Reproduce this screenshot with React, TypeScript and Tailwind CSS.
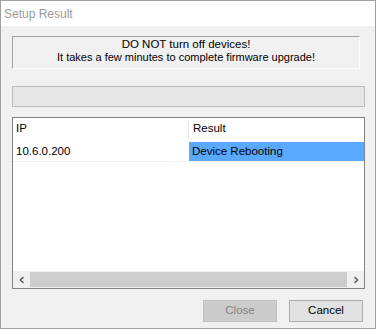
import React from "react";

const font = { fontFamily: '"Liberation Sans", Arial, sans-serif' };

function HScrollbar() {
  return (
    <div className="flex h-[17px] bg-[#f0f0f0] items-stretch">
      <div className="w-[17px] flex items-center justify-center">
        <svg width="8" height="8" viewBox="0 0 8 8">
          <path d="M5.5 1 L2.5 4 L5.5 7" fill="none" stroke="#606060" strokeWidth="1.6" />
        </svg>
      </div>
      <div className="flex-1 py-[1px]">
        <div className="h-full bg-[#cdcdcd]" />
      </div>
      <div className="w-[17px] flex items-center justify-center">
        <svg width="8" height="8" viewBox="0 0 8 8">
          <path d="M2.5 1 L5.5 4 L2.5 7" fill="none" stroke="#606060" strokeWidth="1.6" />
        </svg>
      </div>
    </div>
  );
}

export default function App() {
  return (
    <div
      className="w-[376px] h-[329px] border border-[#a0a0a0] flex flex-col text-[11.5px] text-black bg-[#f0f0f0]"
      style={font}
    >
      <div className="h-[25px] bg-white flex items-center pl-[3px] text-[12px] text-[#999999]">
        Setup Result
      </div>
      <div className="flex-1 flex flex-col pl-[11px] pr-[10px] pt-[10px]">
        <div className="w-[348px] h-[33px] border border-[#a0a0a0] border-r-white border-b-white flex flex-col items-center pt-[1px] leading-[13px]">
          <span>DO NOT turn off devices!</span>
          <span className="text-[11px]">It takes a few minutes to complete firmware upgrade!</span>
        </div>
        <div className="mt-[17px] h-[21px] w-[353px] border border-[#bcbcbc] bg-[#e6e6e6]" />
        <div className="mt-[10px] w-[353px] h-[172px] border border-[#828282] bg-white flex flex-col">
          <div className="h-[22px] flex items-center bg-white">
            <div className="w-[175px] pl-[3px]">IP</div>
            <div className="w-px h-[17px] bg-[#e5e5e5]" />
            <div className="flex-1 pl-[4px]">Result</div>
          </div>
          <div className="mt-[2px] h-[20px] flex border-b border-[#f0f0f0]">
            <div className="w-[176px] pl-[3px] flex items-center">10.6.0.200</div>
            <div className="flex-1 pl-[3px] flex items-center bg-[#5aa9ff]">Device Rebooting</div>
          </div>
          <div className="flex-1" />
          <HScrollbar />
        </div>
        <div className="mt-[11px] flex justify-end gap-[12px] pr-[2px]">
          <button className="w-[74px] h-[22px] bg-[#cccccc] border border-[#bfbfbf] text-[#838383]">
            Close
          </button>
          <button className="w-[74px] h-[22px] bg-[#e1e1e1] border border-[#adadad]">
            Cancel
          </button>
        </div>
      </div>
    </div>
  );
}
